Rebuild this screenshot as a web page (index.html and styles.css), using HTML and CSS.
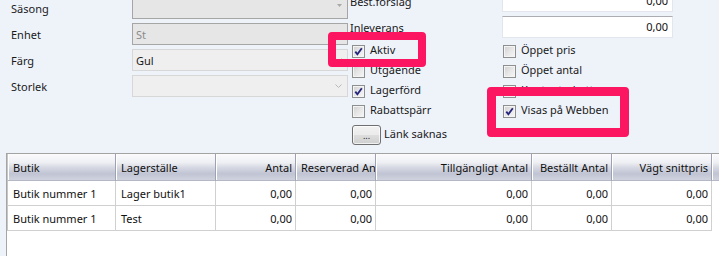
FILE: index.html
```html
<!DOCTYPE html>
<html lang="sv">
<head>
<meta charset="utf-8">
<title>Artikel</title>
<link rel="stylesheet" href="styles.css">
</head>
<body>
<div class="screen">
  <div class="form">
    <div class="left-panel">
      <div class="row"><span class="lbl">Säsong</span>
        <div class="combo disabled"><span class="val"></span>
          <svg class="tri" width="5" height="3" viewBox="0 0 5 3"><path d="M0 0H5L2.5 3Z" fill="#a9a9a9"/></svg></div></div>
      <div class="row"><span class="lbl">Enhet</span>
        <div class="combo disabled"><span class="val">St</span>
          <svg class="chev" width="7" height="4" viewBox="0 0 7 4"><path d="M0.5 0.5L3.5 3.5L6.5 0.5" fill="none" stroke="#b8b8b8"/></svg></div></div>
      <div class="row"><span class="lbl">Färg</span>
        <div class="combo"><span class="val dark">Gul</span>
          <svg class="chev" width="7" height="4" viewBox="0 0 7 4"><path d="M0.5 0.5L3.5 3.5L6.5 0.5" fill="none" stroke="#b8b8b8"/></svg></div></div>
      <div class="row"><span class="lbl">Storlek</span>
        <div class="combo"><span class="val"></span>
          <svg class="chev" width="7" height="4" viewBox="0 0 7 4"><path d="M0.5 0.5L3.5 3.5L6.5 0.5" fill="none" stroke="#b8b8b8"/></svg></div></div>
    </div>

    <div class="right-panel">
      <div class="field"><span class="flbl">Best.förslag</span><div class="tb">0,00</div></div>
      <div class="field"><span class="flbl">Inleverans</span><div class="tb">0,00</div></div>
      <div class="checks">
        <div class="chk"><span class="cb"><svg width="11" height="11" viewBox="0 0 11 11"><path d="M2.3 5.6L4.4 8.3L8.8 2.2" fill="none" stroke="#24247e" stroke-width="1.8"/></svg></span><span class="t">Aktiv</span></div>
        <div class="chk r"><span class="cb"></span><span class="t">Öppet pris</span></div>
        <div class="chk"><span class="cb"></span><span class="t">Utgående</span></div>
        <div class="chk r"><span class="cb"></span><span class="t">Öppet antal</span></div>
        <div class="chk"><span class="cb"><svg width="11" height="11" viewBox="0 0 11 11"><path d="M2.3 5.6L4.4 8.3L8.8 2.2" fill="none" stroke="#24247e" stroke-width="1.8"/></svg></span><span class="t">Lagerförd</span></div>
        <div class="chk r"><span class="cb"></span><span class="t">Kontantrabatt</span></div>
        <div class="chk"><span class="cb"></span><span class="t">Rabattspärr</span></div>
        <div class="chk r"><span class="cb"><svg width="11" height="11" viewBox="0 0 11 11"><path d="M2.3 5.6L4.4 8.3L8.8 2.2" fill="none" stroke="#24247e" stroke-width="1.8"/></svg></span><span class="t">Visas på Webben</span></div>
      </div>
      <div class="link-row"><span class="btn">...</span><span class="t">Länk saknas</span></div>
    </div>
  </div>

  <div class="grid">
    <table>
      <colgroup>
        <col class="c1"><col class="c2"><col class="c3"><col class="c4"><col class="c5"><col class="c6"><col class="c7"><col class="c8">
      </colgroup>
      <thead>
        <tr>
          <th class="first">Butik</th>
          <th>Lagerställe</th>
          <th class="num">Antal</th>
          <th class="num">Reserverad Antal</th>
          <th class="num">Tillgängligt Antal</th>
          <th class="num">Beställt Antal</th>
          <th class="num">Vägt snittpris</th>
          <th></th>
        </tr>
      </thead>
      <tbody>
        <tr>
          <td class="first">Butik nummer 1</td>
          <td>Lager butik1</td>
          <td class="num">0,00</td>
          <td class="num">0,00</td>
          <td class="num">0,00</td>
          <td class="num">0,00</td>
          <td class="num">0,00</td>
          <td class="blank"></td>
        </tr>
        <tr>
          <td class="first">Butik nummer 1</td>
          <td>Test</td>
          <td class="num">0,00</td>
          <td class="num">0,00</td>
          <td class="num">0,00</td>
          <td class="num">0,00</td>
          <td class="num">0,00</td>
          <td class="blank"></td>
        </tr>
      </tbody>
    </table>
  </div>

  <div class="mark mark1"></div>
  <div class="mark mark2"></div>
</div>
</body>
</html>
```

FILE: styles.css
```css
html, body {
  margin: 0;
  padding: 0;
}
body {
  background: #eef3fa;
  font-family: "Noto Sans", "Open Sans", sans-serif;
  font-size: 11px;
  color: #1a1a1a;
  width: 719px;
  height: 256px;
  overflow: hidden;
}
.screen {
  position: relative;
  width: 719px;
  height: 256px;
  overflow: hidden;
}

/* ---------- form ---------- */
.form {
  display: flex;
  height: 163px;
  margin-top: -10px;
}
.left-panel {
  display: flex;
  flex-direction: column;
  margin-top: 5px;
  padding-left: 11px;
}
.row {
  display: flex;
  align-items: center;
  height: 26px;
}
.lbl {
  width: 121px;
}
.combo {
  width: 216px;
  height: 22px;
  box-sizing: border-box;
  border: 1px solid #d7d7d7;
  background: #efefef;
  display: flex;
  align-items: center;
  justify-content: space-between;
  padding: 0 5px 0 3px;
}
.combo.disabled {
  background: #e6e6e6;
  border-color: #a6a6a6;
}
.val {
  color: #8b8b8b;
}
.val.dark {
  color: #1a1a1a;
}
.tri {
  display: block;
  margin-top: -6px;
}
.chev {
  display: block;
}

.right-panel {
  display: flex;
  flex-direction: column;
  margin-left: 2px;
}
.field {
  display: flex;
  align-items: center;
  height: 22px;
}
.field + .field {
  margin-top: 4px;
}
.flbl {
  width: 152px;
}
.tb {
  width: 171px;
  height: 22px;
  box-sizing: border-box;
  background: #fff;
  border: 1px solid #e3e6ec;
  border-top-color: #abadb3;
  text-align: right;
  padding-right: 4px;
  line-height: 20px;
  color: #111;
}
.checks {
  display: grid;
  grid-template-columns: 152px 171px;
  row-gap: 7px;
  margin-top: 7px;
}
.chk {
  display: flex;
  align-items: center;
  height: 13px;
  padding-left: 2px;
}
.chk.r {
  padding-left: 1px;
}
.cb {
  flex: none;
  width: 13px;
  height: 13px;
  box-sizing: border-box;
  border: 1px solid #8e8f8f;
  background: linear-gradient(135deg, #d0d0d0 0%, #e6e6e6 50%, #f7f7f7 100%);
  box-shadow: inset 0 0 0 1px #f4f4f4;
  margin-right: 5px;
  display: flex;
}
.cb svg {
  display: block;
}
.t {
  margin-bottom: 4px;
  white-space: nowrap;
}
.link-row {
  display: flex;
  align-items: center;
  height: 20px;
  margin-top: 7px;
  padding-left: 2px;
}
.btn {
  width: 29px;
  height: 20px;
  box-sizing: border-box;
  border: 1px solid #707070;
  border-radius: 3px;
  background: linear-gradient(#f2f2f2 0%, #ebebeb 48%, #dddddd 52%, #cfcfcf 100%);
  box-shadow: inset 0 0 0 1px rgba(255,255,255,0.7);
  margin-right: 3px;
  font-size: 9px;
  line-height: 1;
  text-align: center;
  display: flex;
  align-items: flex-end;
  justify-content: center;
  padding-bottom: 4px;
  color: #222;
}
.link-row .t {
  margin-bottom: 3px;
}

/* ---------- grid ---------- */
.grid {
  margin-left: 6px;
  border-left: 1px solid #a6a6a6;
  border-top: 1px solid #a3a3a3;
  background: #fff;
  height: 110px;
}
table {
  border-collapse: separate;
  border-spacing: 0;
  table-layout: fixed;
  width: 805px;
}
col.c1 { width: 109px; }
col.c2 { width: 100px; }
col.c3 { width: 80px; }
col.c4 { width: 80px; }
col.c5 { width: 156px; }
col.c6 { width: 80px; }
col.c7 { width: 100px; }
col.c8 { width: 100px; }
th, td {
  padding: 0 3px 0 5px;
  white-space: nowrap;
  overflow: hidden;
  font-weight: normal;
  text-align: left;
  color: #111;
}
th {
  height: 26px;
  box-sizing: content-box;
  background: linear-gradient(to bottom, #fbfbfd 0%, #eff0f4 32%, #d6d9e3 52%, #c0c4d3 76%, #d0d3de 100%);
  border-right: 1px solid #9ea2b0;
  border-bottom: 1px solid #b4b8c4;
  box-shadow: inset 1px 0 0 #ffffff;
}
td {
  height: 24px;
  box-sizing: content-box;
  border-right: 1px solid #d0d0d0;
  border-bottom: 1px solid #d0d0d0;
}
.first {
  border-left: 1px solid #c6c6c6;
}
.num {
  text-align: right;
}
td.blank {
  border: none;
}

/* ---------- annotation highlights ---------- */
.mark {
  position: absolute;
  box-sizing: border-box;
  border: 8px solid #fc1561;
  border-radius: 4px;
}
.mark1 {
  left: 328px;
  top: 32px;
  width: 98px;
  height: 35px;
}
.mark2 {
  left: 487px;
  top: 87px;
  width: 142px;
  height: 50px;
  border-width: 9px;
}
```
